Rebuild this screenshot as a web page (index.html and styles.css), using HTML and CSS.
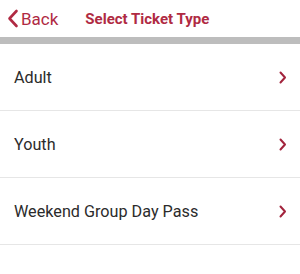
FILE: index.html
```html
<!DOCTYPE html>
<html>
<head>
<meta charset="utf-8">
<link rel="stylesheet" href="styles.css">
</head>
<body>
<header class="nav">
  <a class="back">
    <svg class="back-icon" width="12" height="19" viewBox="0 0 12 19"><path d="M9.5 2 L2.5 9.5 L9.5 17" fill="none" stroke="currentColor" stroke-width="2.6" stroke-linecap="round" stroke-linejoin="round"/></svg>
    <span>Back</span>
  </a>
  <h1 class="title">Select Ticket Type</h1>
</header>
<div class="divider"></div>
<ul class="list">
  <li class="row"><span>Adult</span><svg class="chev" width="8" height="13" viewBox="0 0 8 13"><path d="M1.5 1.5 L6 6.5 L1.5 11.5" fill="none" stroke="currentColor" stroke-width="2" stroke-linecap="round" stroke-linejoin="round"/></svg></li>
  <li class="row"><span>Youth</span><svg class="chev" width="8" height="13" viewBox="0 0 8 13"><path d="M1.5 1.5 L6 6.5 L1.5 11.5" fill="none" stroke="currentColor" stroke-width="2" stroke-linecap="round" stroke-linejoin="round"/></svg></li>
  <li class="row"><span>Weekend Group Day Pass</span><svg class="chev" width="8" height="13" viewBox="0 0 8 13"><path d="M1.5 1.5 L6 6.5 L1.5 11.5" fill="none" stroke="currentColor" stroke-width="2" stroke-linecap="round" stroke-linejoin="round"/></svg></li>
</ul>
</body>
</html>
```

FILE: styles.css
```css
* { box-sizing: border-box; }
html, body { margin: 0; padding: 0; background: #fff; }
body { font-family: Roboto, "Noto Sans", sans-serif; width: 300px; }
.nav {
  height: 37px;
  display: flex;
  align-items: center;
  padding-left: 7px;
  color: #b02a43;
}
.back {
  display: flex;
  align-items: center;
  gap: 2px;
  font-size: 17px;
  color: #b02a43;
}
.back-icon { display: block; }
.title {
  margin: 0 0 0 27px;
  font-size: 15px;
  font-weight: 700;
  color: #b02a43;
}
.divider { height: 7px; background: #bdbdbd; }
.list { list-style: none; margin: 0; padding: 0; }
.row {
  height: 67px;
  display: flex;
  align-items: center;
  justify-content: space-between;
  padding: 0 13px 0 14px;
  border-bottom: 1px solid #e6e6e6;
  font-size: 16.2px;
  color: #2b2b2b;
}
.chev { color: #a3243d; display: block; }
```
